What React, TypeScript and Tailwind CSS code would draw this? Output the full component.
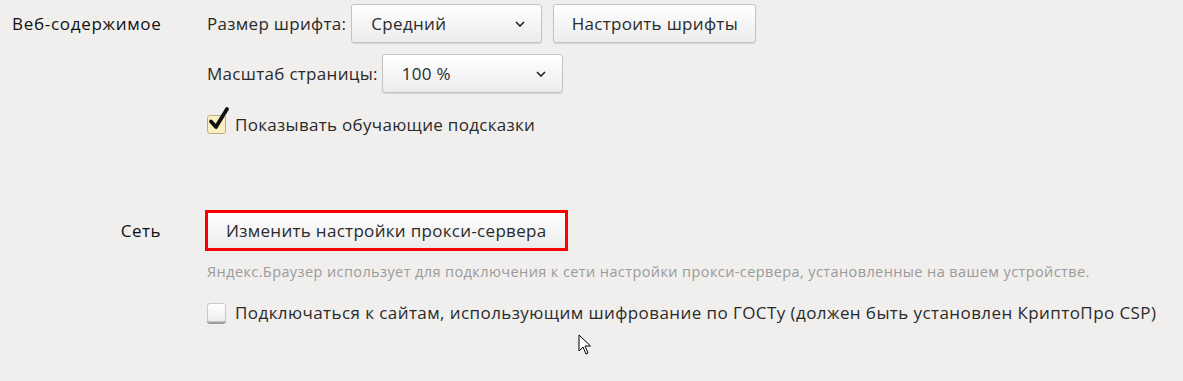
import React from 'react';

const font = { fontFamily: '"Open Sans", "Noto Sans", sans-serif' };

function Chevron() {
    return (
        <svg width="10" height="6" viewBox="0 0 10 6" className="shrink-0">
            <path d="M1 1l4 4 4-4" fill="none" stroke="#222" strokeWidth="1.6" />
        </svg>
    );
}

function Select({ value, width }: { value: string; width: string }) {
    return (
        <div
            className={`${width} h-[39px] flex items-center justify-between pl-[19px] pr-[16px] rounded-[3px] border border-[#c4c4c4] bg-gradient-to-b from-white to-[#ececec] shadow-[0_1px_1px_rgba(0,0,0,0.12)]`}
        >
            <span>{value}</span>
            <Chevron />
        </div>
    );
}

function CheckedBox() {
    return (
        <div className="relative w-[19px] h-[19px] shrink-0 rounded-[3px] border border-[#b8ad90] bg-[#fbefc2]">
            <svg width="24" height="26" viewBox="0 0 24 26" className="absolute left-[-1px] top-[-10px]">
                <path d="M4 15.5l5 5.5L20 3" fill="none" stroke="#111" strokeWidth="3.8" strokeLinecap="round" strokeLinejoin="round" />
            </svg>
        </div>
    );
}

function EmptyBox() {
    return (
        <div className="w-[19px] h-[19px] shrink-0 rounded-[3px] border border-[#c8c8c8] bg-gradient-to-b from-white to-[#eeeeee] shadow-[0_2px_0_#9e9e9e]" />
    );
}

export default function App() {
    return (
        <div
            className="w-[1183px] h-[381px] bg-[#f0efed] text-[#2a2a2a] text-[17px] tracking-[0.3px] relative overflow-hidden"
            style={font}
        >
            {/* Веб-содержимое */}
            <div className="flex pt-[4px]">
                <div className="w-[161px] shrink-0 h-[39px] flex items-center pl-[12px] text-[#111] tracking-[0.7px] whitespace-nowrap">
                    Веб-содержимое
                </div>
                <div className="ml-[46px] flex flex-col">
                    <div className="flex items-center h-[39px]">
                        <span>Размер шрифта:</span>
                        <div className="ml-[5px]">
                            <Select value="Средний" width="w-[191px]" />
                        </div>
                        <button className="ml-[11px] h-[39px] w-[203px] rounded-[3px] border border-[#c4c4c4] bg-gradient-to-b from-white to-[#ececec] shadow-[0_1px_1px_rgba(0,0,0,0.12)]">
                            Настроить шрифты
                        </button>
                    </div>
                    <div className="flex items-center h-[39px] mt-[11px]">
                        <span>Масштаб страницы:</span>
                        <div className="ml-[4px]">
                            <Select value="100 %" width="w-[181px]" />
                        </div>
                    </div>
                    <div className="flex items-center mt-[22px] h-[19px]">
                        <CheckedBox />
                        <span className="ml-[9px]">Показывать обучающие подсказки</span>
                    </div>
                </div>
            </div>

            {/* Сеть */}
            <div className="flex mt-[76px]">
                <div className="w-[161px] shrink-0 h-[41px] flex items-center justify-end text-[#111] tracking-[0.5px]">
                    Сеть
                </div>
                <div className="ml-[44px] flex flex-col">
                    <div className="w-[363px] h-[41px] border-[3px] border-[#ff0000] bg-gradient-to-b from-white to-[#ececec] flex items-center pl-[18px]">
                        Изменить настройки прокси-сервера
                    </div>
                    <p className="ml-[2px] mt-[12px] text-[14.5px] tracking-[0.4px] leading-[18px] text-[#9a9a9a]">
                        Яндекс.Браузер использует для подключения к сети настройки прокси-сервера, установленные на вашем устройстве.
                    </p>
                    <div className="ml-[2px] flex items-center mt-[22px] h-[19px]">
                        <EmptyBox />
                        <span className="ml-[9px] whitespace-nowrap tracking-[0.42px]">
                            Подключаться к сайтам, использующим шифрование по ГОСТу (должен быть установлен КриптоПро CSP)
                        </span>
                    </div>
                </div>
            </div>

            {/* mouse pointer */}
            <svg width="14" height="22" viewBox="0 0 14 22" className="absolute left-[578px] top-[334px]">
                <path d="M1 1v16l4-4 3 7 2-1-3-7h5.5z" fill="#fff" stroke="#000" strokeWidth="1" strokeLinejoin="round" />
            </svg>
        </div>
    );
}
